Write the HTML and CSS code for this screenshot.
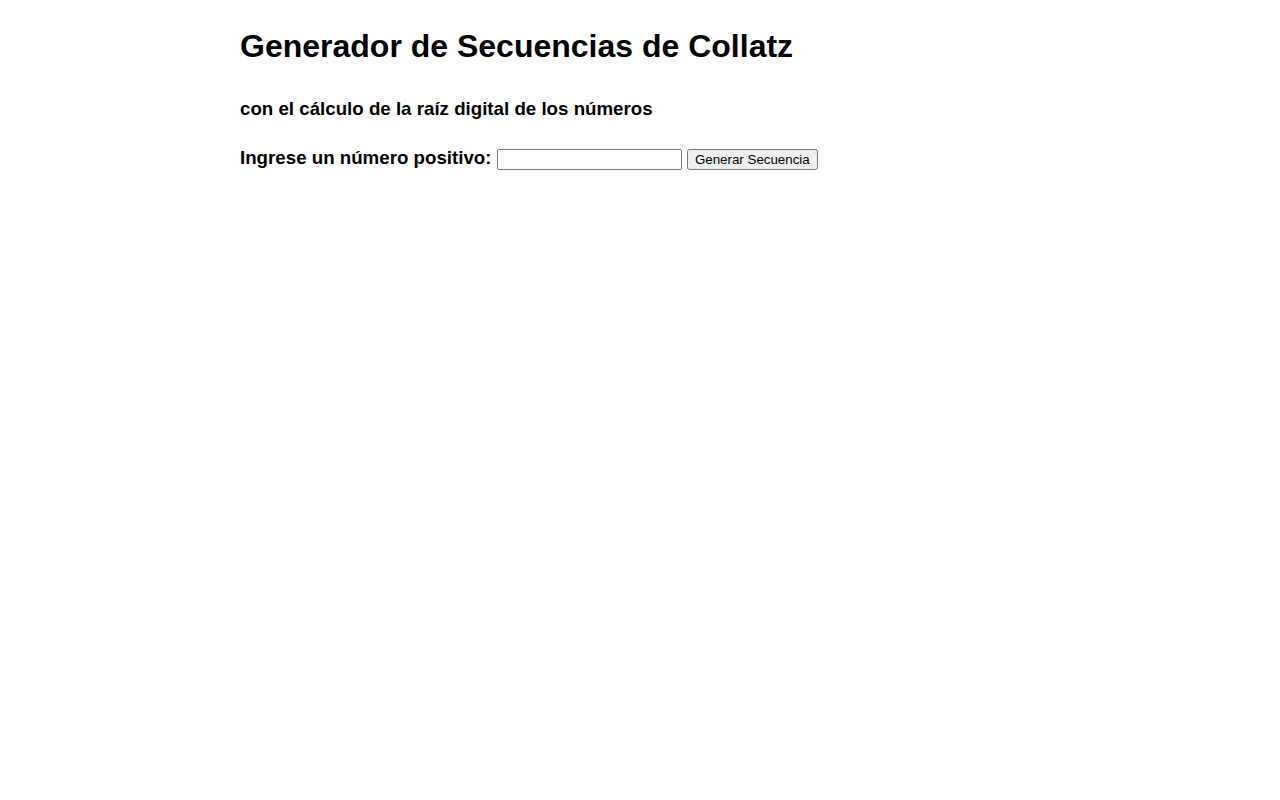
FILE: index.html
```html
<!DOCTYPE html>
<html lang="es">
<head>
<meta charset="utf-8">
<title>Generador de Secuencias de Collatz</title>
<link rel="stylesheet" href="styles.css">
</head>
<body>
<div class="container">
  <h1 class="title">Generador de Secuencias de Collatz</h1>
  <h3 class="subtitle">con el cálculo de la raíz digital de los números</h3>
  <div class="form-row">
    <label class="label" for="num">Ingrese un número positivo:</label>
    <input class="input" id="num" type="number">
    <button class="btn">Generar Secuencia</button>
  </div>
</div>
</body>
</html>
```
FILE: styles.css
```css
body {
  margin: 0;
  font-family: "Liberation Sans", Arial, sans-serif;
  color: #000;
  background: #fff;
}
.container {
  width: 800px;
  margin: 0 auto;
  padding-top: 7px;
}
.title {
  font-size: 32px;
  font-weight: bold;
  margin: 21px 0 33px;
}
.subtitle {
  font-size: 18.72px;
  font-weight: bold;
  margin: 0 0 27px;
}
.form-row {
  font-size: 18.72px;
}
.label {
  font-weight: bold;
}
.input {
  font-family: "Liberation Sans", Arial, sans-serif;
  font-size: 13.33px;
  width: 177px;
}
.btn {
  font-family: "Liberation Sans", Arial, sans-serif;
  font-size: 13.33px;
}
```
